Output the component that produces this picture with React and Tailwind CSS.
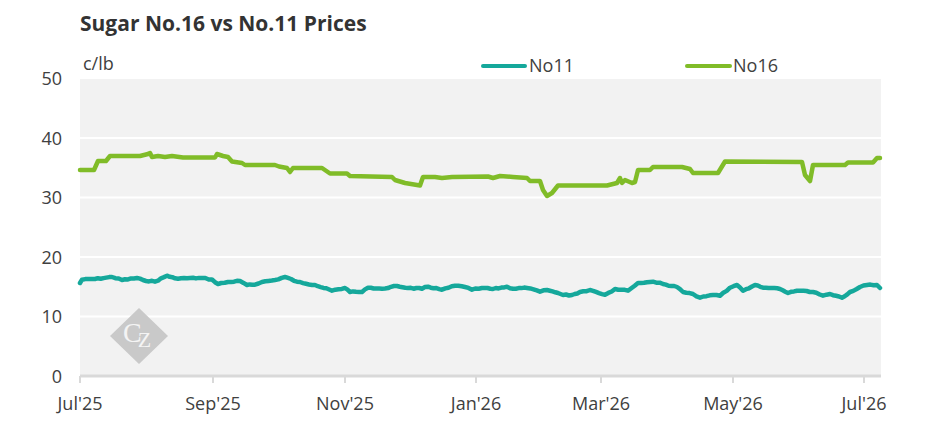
import React from 'react'

// Graphique prix du sucre No.16 / No.11
const FONT = { fontFamily: '"Open Sans", "Liberation Sans", sans-serif' }

const NO16 = [
  [80, 170], [94, 170], [98, 161], [106, 161], [110, 156], [140, 156], [148, 154], [150, 153], [152, 157],
  [158, 156], [165, 157], [172, 156], [183, 157.5], [215, 157.5], [217, 154], [223, 156], [228, 157],
  [232, 161.5], [242, 163], [245, 165], [275, 165], [279, 166.5], [287, 168], [290, 172], [293, 168],
  [322, 168], [330, 173.5], [347, 173.5], [350, 176], [392, 177], [395, 180], [405, 183], [420, 185.5],
  [423, 177], [435, 177], [442, 178], [452, 177], [488, 176.5], [493, 178], [500, 176], [513, 177],
  [527, 178], [530, 181], [540, 181], [543, 190], [547, 196], [552, 193], [558, 185.5], [607, 185.5],
  [617, 183], [620, 178], [622, 183], [625, 180], [632, 183], [635, 182], [638, 170], [650, 170],
  [653, 167], [682, 167], [690, 169], [693, 173], [718, 173], [725, 161.5], [802, 162], [805, 175],
  [810, 181], [813, 165], [845, 165], [848, 162.5], [873, 162.5], [877, 158], [880, 158],
]

const NO11 = [
  [80, 283], [82, 279.7], [95, 279], [112, 277], [122, 280], [137, 278], [143, 280], [155, 281.7],
  [167, 275.7], [175, 278.3], [202, 278], [212, 279.5], [218, 284], [228, 282], [240, 281], [247, 285],
  [255, 284.7], [262, 282], [275, 280], [285, 277], [297, 281.7], [315, 285], [332, 290.7], [345, 288],
  [350, 292], [362, 292], [368, 287.7], [382, 288.7], [397, 286], [408, 288], [422, 288.7], [428, 286.7],
  [442, 289.7], [455, 285.7], [465, 287], [472, 289.7], [482, 288], [493, 289], [507, 286.7], [513, 288.7],
  [527, 288], [540, 291.7], [547, 290], [558, 293], [563, 295], [572, 295], [580, 292], [590, 290],
  [605, 294.7], [615, 289], [628, 290.7], [638, 283], [653, 281.7], [663, 284], [677, 287], [683, 292],
  [693, 294], [700, 297.7], [713, 295], [720, 295.7], [730, 287.7], [737, 285], [743, 290.7], [755, 285],
  [763, 287.7], [780, 289], [788, 293], [797, 290.7], [813, 292], [823, 295.7], [830, 294], [842, 297.7],
  [850, 292], [860, 287], [867, 285], [877, 285], [880, 288],
]

// petit bruit deterministe pour la courbe No11
function jagged(points) {
  const out = []
  let seed = 7
  for (let i = 0; i < points.length - 1; i++) {
    const [x1, y1] = points[i]
    const [x2, y2] = points[i + 1]
    const steps = Math.max(1, Math.round((x2 - x1) / 3))
    for (let s = 0; s < steps; s++) {
      const t = s / steps
      seed = (seed * 9301 + 49297) % 233280
      const n = s === 0 ? 0 : (seed / 233280 - 0.5) * 1.2
      out.push([x1 + (x2 - x1) * t, y1 + (y2 - y1) * t + n])
    }
  }
  out.push(points[points.length - 1])
  return out
}

const toPath = (pts) => pts.map(([x, y], i) => `${i ? 'L' : 'M'}${x.toFixed(1)},${y.toFixed(1)}`).join(' ')

const yVal = (v) => 376 - v * 5.95
const TICKS = [
  { x: 80, label: "Jul'25" },
  { x: 213, label: "Sep'25" },
  { x: 345, label: "Nov'25" },
  { x: 476, label: "Jan'26" },
  { x: 601, label: "Mar'26" },
  { x: 733, label: "May'26" },
  { x: 864, label: "Jul'26" },
]

export default function App() {
  return (
    <div className="w-[945px] h-[443px] bg-white overflow-hidden" style={FONT}>
      <div className="pl-[80px] pt-[9px] text-[21px] leading-[28px] font-bold text-[#333333]">
        Sugar No.16 vs No.11 Prices
      </div>
      <svg width="945" height="406" viewBox="0 37 945 406" className="block">
        {/* zone du graphique */}
        <rect x="80" y="79" width="801" height="297" fill="#f2f2f2" />
        {[10, 20, 30, 40].map((v) => (
          <line key={v} x1="80" x2="881" y1={yVal(v)} y2={yVal(v)} stroke="#ffffff" strokeWidth="2" />
        ))}
        <line x1="80" x2="881" y1="376" y2="376" stroke="#d9d9d9" strokeWidth="3" />
        {TICKS.map((t) => (
          <line key={t.label} x1={t.x} x2={t.x} y1="376" y2="383" stroke="#d9d9d9" strokeWidth="2" />
        ))}

        {/* filigrane */}
        <polygon points="139,308 168,336 139,364 110,336" fill="#c9c9c9" />
        <text x="123" y="342" fontSize="28" fill="#f4f4f4" fontFamily='"Liberation Serif", serif'>
          C<tspan dx="-4" dy="5" fontSize="22">Z</tspan>
        </text>

        {/* courbes */}
        <path d={toPath(jagged(NO11))} fill="none" stroke="#15a89b" strokeWidth="4.5" strokeLinejoin="round" strokeLinecap="round" />
        <path d={toPath(NO16)} fill="none" stroke="#80bc28" strokeWidth="4.5" strokeLinejoin="round" strokeLinecap="round" />

        {/* axes */}
        <g fontSize="18" fill="#404040" fontFamily='"Open Sans", sans-serif'>
          {[0, 10, 20, 30, 40, 50].map((v) => (
            <text key={v} x="62" y={yVal(v) + 6.5} textAnchor="end">{v}</text>
          ))}
          {TICKS.map((t) => (
            <text key={t.label} x={t.x} y="410" textAnchor="middle">{t.label}</text>
          ))}
          <text x="83" y="70">c/lb</text>

          {/* legende */}
          <line x1="483" x2="525" y1="66" y2="66" stroke="#15a89b" strokeWidth="4" strokeLinecap="round" />
          <text x="529" y="72">No11</text>
          <line x1="687" x2="730" y1="66" y2="66" stroke="#80bc28" strokeWidth="4" strokeLinecap="round" />
          <text x="733" y="72">No16</text>
        </g>
      </svg>
    </div>
  )
}
